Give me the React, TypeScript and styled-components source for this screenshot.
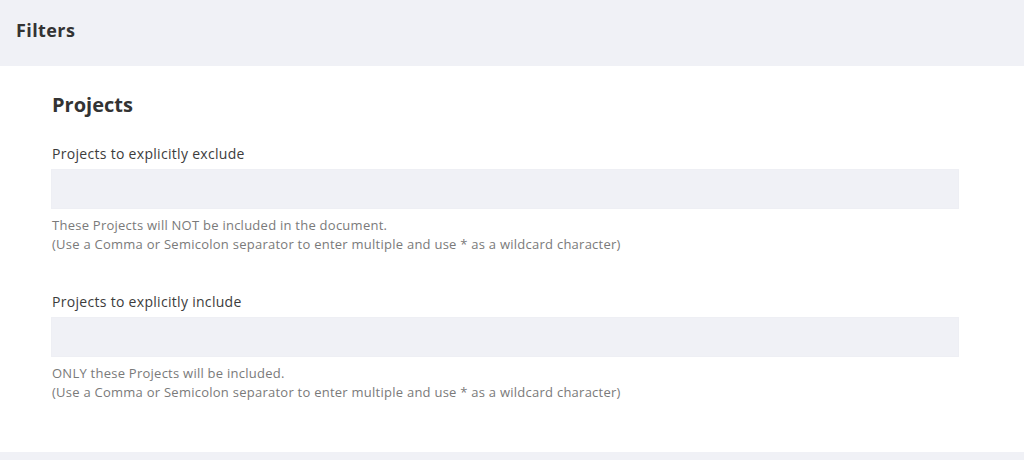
import styled, { createGlobalStyle } from 'styled-components';

const GlobalStyle = createGlobalStyle`
  body {
    margin: 0;
    background: #ffffff;
    font-family: 'Open Sans', 'Noto Sans', sans-serif;
    color: #333333;
  }
`;

const S = {
  Page: styled.div`
    display: flex;
    flex-direction: column;
    min-height: 460px;
  `,
  Header: styled.div`
    height: 66px;
    box-sizing: border-box;
    display: flex;
    align-items: center;
    padding: 0 0 6px 16px;
    background-color: #f0f1f6;
    font-size: 18px;
    font-weight: 700;
    letter-spacing: 0.4px;
    color: #333333;
  `,
  Body: styled.div`
    padding: 25px 65px 0 51px;
    flex: 1;
  `,
  Title: styled.h2`
    margin: 0 0 25px 1px;
    font-size: 20px;
    line-height: 28px;
    font-weight: 700;
    color: #333333;
  `,
  Field: styled.div`
    display: flex;
    flex-direction: column;
    margin-bottom: 38px;
  `,
  Label: styled.label`
    font-size: 14px;
    line-height: 20px;
    letter-spacing: 0.3px;
    color: #3c3c3c;
    margin: 0 0 5px 1px;
  `,
  Input: styled.input`
    height: 40px;
    box-sizing: border-box;
    border: 1px solid #eeeff4;
    background-color: #f0f1f6;
    outline: none;
    padding: 0 10px;
    font: inherit;
  `,
  Help: styled.div`
    margin: 7px 0 0 1px;
    font-size: 13px;
    line-height: 19px;
    letter-spacing: 0.25px;
    color: #7a7a7a;
  `,
  Footer: styled.div`
    height: 8px;
    background-color: #f0f1f6;
  `,
};

const fields = [
  {
    label: 'Projects to explicitly exclude',
    help: 'These Projects will NOT be included in the document.',
  },
  {
    label: 'Projects to explicitly include',
    help: 'ONLY these Projects will be included.',
  },
];

const App = () => (
  <>
    <GlobalStyle />
    <S.Page>
      <S.Header>Filters</S.Header>
      <S.Body>
        <S.Title>Projects</S.Title>
        {fields.map((f) => (
          <S.Field key={f.label}>
            <S.Label>{f.label}</S.Label>
            <S.Input type="text" />
            <S.Help>
              {f.help}
              <br />
              (Use a Comma or Semicolon separator to enter multiple and use * as a wildcard character)
            </S.Help>
          </S.Field>
        ))}
      </S.Body>
      <S.Footer />
    </S.Page>
  </>
);

export default App;
